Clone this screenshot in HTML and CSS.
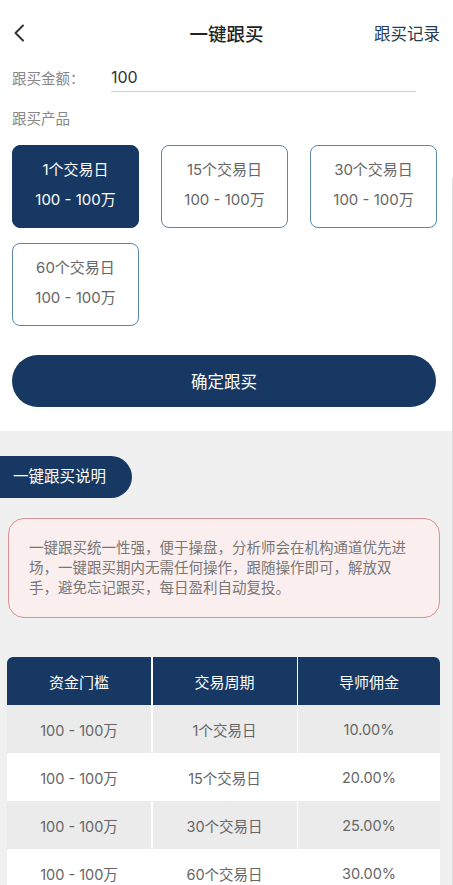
FILE: index.html
```html
<!DOCTYPE html>
<html lang="zh-CN">
<head>
<meta charset="utf-8">
<title>一键跟买</title>
<link rel="stylesheet" href="styles.css">
</head>
<body>
<div class="page">
  <header class="topbar">
    <span class="back">
      <svg width="12" height="18" viewBox="0 0 12 18"><path d="M10 1.5 L2.5 9 L10 16.5" fill="none" stroke="#333" stroke-width="2" stroke-linecap="round" stroke-linejoin="round"/></svg>
    </span>
    <h1 class="title">一键跟买</h1>
    <span class="record">跟买记录</span>
  </header>

  <div class="amount-row">
    <span class="label">跟买金额：</span>
    <div class="amount-input">100</div>
  </div>

  <div class="section-label">跟买产品</div>

  <div class="products">
    <div class="product active"><span>1个交易日</span><span>100 - 100万</span></div>
    <div class="product"><span>15个交易日</span><span>100 - 100万</span></div>
    <div class="product"><span>30个交易日</span><span>100 - 100万</span></div>
    <div class="product"><span>60个交易日</span><span>100 - 100万</span></div>
  </div>

  <div class="btn-wrap">
    <button class="confirm">确定跟买</button>
  </div>

  <section class="info">
    <div class="pill">一键跟买说明</div>
    <div class="notice">一键跟买统一性强，便于操盘，分析师会在机构通道优先进场，一键跟买期内无需任何操作，跟随操作即可，解放双手，避免忘记跟买，每日盈利自动复投。</div>

    <div class="table">
      <div class="row head"><div>资金门槛</div><div>交易周期</div><div>导师佣金</div></div>
      <div class="row odd"><div>100 - 100万</div><div>1个交易日</div><div>10.00%</div></div>
      <div class="row"><div>100 - 100万</div><div>15个交易日</div><div>20.00%</div></div>
      <div class="row odd"><div>100 - 100万</div><div>30个交易日</div><div>25.00%</div></div>
      <div class="row"><div>100 - 100万</div><div>60个交易日</div><div>30.00%</div></div>
    </div>
  </section>
</div>
</body>
</html>
```

FILE: styles.css
```css
* { box-sizing: border-box; margin: 0; padding: 0; }
html, body { background: #fff; }
body {
  font-family: Inter, "Noto Sans CJK SC", "Noto Sans", sans-serif;
  color: #333;
  overflow: hidden;
}
.page { width: 453px; position: relative; }
.page::after {
  content: "";
  position: absolute;
  right: 0;
  top: 178px;
  bottom: 0;
  width: 1px;
  background: #dcdcdc;
}

.topbar {
  height: 62px;
  display: flex;
  align-items: center;
  justify-content: space-between;
  padding: 4px 13px 0 13px;
  position: relative;
}
.back { display: flex; width: 12px; height: 18px; }
.title {
  position: absolute;
  left: 0; right: 0;
  text-align: center;
  font-size: 18.5px;
  font-weight: 500;
  color: #222;
  pointer-events: none;
}
.record { font-size: 16.5px; color: #263d55; }

.amount-row {
  display: flex;
  align-items: center;
  height: 30px;
  padding-left: 12px;
}
.label { width: 99px; font-size: 14.5px; color: #888; }
.amount-input {
  width: 305px;
  height: 30px;
  line-height: 30px;
  font-size: 16px;
  color: #333;
  border-bottom: 1.5px solid #cfcfcf;
}

.section-label {
  margin-top: 17px;
  padding-left: 12px;
  font-size: 14.5px;
  line-height: 20px;
  color: #888;
}

.products {
  margin-top: 16px;
  padding-left: 12px;
  display: grid;
  grid-template-columns: repeat(3, 127px);
  column-gap: 22px;
  row-gap: 15px;
}
.product {
  height: 83px;
  border: 1.5px solid #5b87ad;
  border-radius: 8px;
  display: flex;
  flex-direction: column;
  align-items: center;
  justify-content: center;
  padding-bottom: 3px;
  font-size: 15px;
  line-height: 30px;
  color: #666;
  background: #fff;
}
.product.active {
  background: #173862;
  border-color: #173862;
  color: #fff;
}

.btn-wrap { padding: 29px 17px 24px 12px; }
.confirm {
  display: block;
  width: 100%;
  height: 52px;
  border: none;
  border-radius: 26px;
  background: #173862;
  color: #fff;
  font-family: inherit;
  font-size: 16.5px;
}

.info {
  background: #f0f0f0;
  padding-top: 25px;
  padding-bottom: 40px;
}
.pill {
  width: 132px;
  height: 42px;
  line-height: 42px;
  padding-left: 13px;
  background: #173862;
  color: #fff;
  font-size: 15.5px;
  border-radius: 0 21px 21px 0;
}
.notice {
  margin: 20px 0 0 8px;
  width: 432px;
  background: #fbeeee;
  border: 1.5px solid #dc9193;
  border-radius: 16px;
  padding: 19px 24px 19px 20px;
  font-size: 14.5px;
  line-height: 20px;
  color: #777;
}

.table {
  margin: 39px 0 0 7px;
  width: 433px;
  border-radius: 6px 6px 0 0;
  overflow: hidden;
}
.row {
  display: grid;
  grid-template-columns: 144px 144px 1fr;
  column-gap: 1.5px;
  height: 48px;
  background: #fff;
}
.row > div {
  display: flex;
  align-items: center;
  justify-content: center;
  font-size: 14.5px;
  color: #666;
}
.row.head > div { background: #173862; color: #fff; font-size: 15px; }
.row.odd > div { background: #ebebeb; }
.row:not(.head):not(.odd) > div { background: #fff; }
```
